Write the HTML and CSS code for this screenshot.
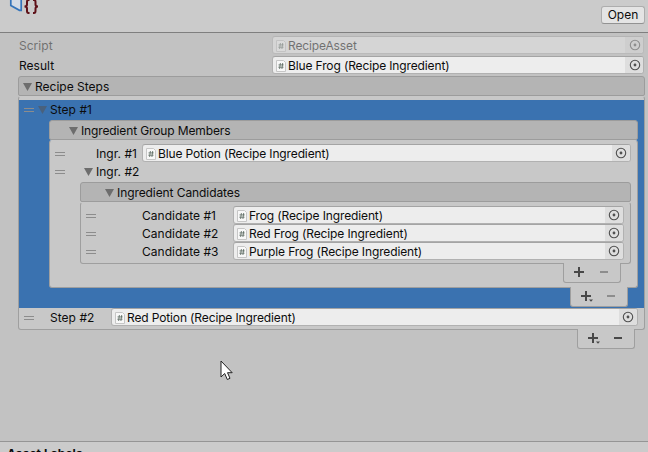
FILE: index.html
```html
<!DOCTYPE html>
<html lang="en">
<head>
<meta charset="utf-8">
<title>Inspector</title>
<link rel="stylesheet" href="styles.css">
</head>
<body>
<svg class="defs" width="0" height="0">
  <symbol id="script" viewBox="0 0 12 14"><path d="M1.500 1.500h7l2 2v9h-9z" fill="#f8f8f8" stroke="#c6c6c6"/><path d="M5.400 4l-.8 6M7.700 4l-.8 6M3.500 5.900h5.200M3.300 8.200h5.200" stroke="#56655c" stroke-width=".8" fill="none"/></symbol>
  <symbol id="pick" viewBox="0 0 12 12"><circle cx="6" cy="6" r="4.700" fill="none" stroke="#505050" stroke-width="1.100"/><circle cx="6" cy="6" r="1.400" fill="#505050"/></symbol>
  <symbol id="plus" viewBox="0 0 14 12"><path d="M0 6h10M5 1v10" stroke="#484848" stroke-width="2"/></symbol>
  <symbol id="plusmenu" viewBox="0 0 14 12"><path d="M0 6h10M5 1v10" stroke="#484848" stroke-width="2"/><path d="M8 9.500h4l-2 2.300z" fill="#484848"/></symbol>
</svg>
<header class="top">
  <svg class="logo" width="32" height="16" viewBox="0 0 32 16"><path d="M2.800 0v5.400l8.700 4.900h1.700V0" fill="#d3dbe5" stroke="#3474ba" stroke-width="1.700"/><path d="M21.500 0h-1q-1.500 0-1.500 2v2.500q0 2-2.500 2q2.500 0 2.500 2v2.500q0 2 1.500 2h1M25 0h1q1.500 0 1.500 2v2.500q0 2 2.500 2q-2.500 0-2.500 2v2.500q0 2-1.500 2h-1" fill="none" stroke="#5e1118" stroke-width="2"/></svg>
  <button class="open">Open</button>
</header>
<main class="props">
  <div class="prop off"><label>Script</label><div class="field"><svg class="doc"><use href="#script"/></svg><span>RecipeAsset</span><i><svg><use href="#pick"/></svg></i></div></div>
  <div class="prop"><label>Result</label><div class="field"><svg class="doc"><use href="#script"/></svg><span>Blue Frog (Recipe Ingredient)</span><i><svg><use href="#pick"/></svg></i></div></div>

  <section class="list steps">
    <h2 class="head"><b class="tri"></b>Recipe Steps</h2>
    <div class="body">
      <div class="selected">
        <div class="title"><b class="grip"></b><b class="tri"></b>Step #1</div>
        <section class="list members">
          <h3 class="head"><b class="tri"></b>Ingredient Group Members</h3>
          <div class="body">
            <div class="row"><b class="grip"></b><label>Ingr. #1</label><div class="field"><svg class="doc"><use href="#script"/></svg><span>Blue Potion (Recipe Ingredient)</span><i><svg><use href="#pick"/></svg></i></div></div>
            <div class="row"><b class="grip"></b><b class="tri"></b><span>Ingr. #2</span></div>
            <section class="list candidates">
              <h4 class="head"><b class="tri"></b>Ingredient Candidates</h4>
              <div class="body">
                <div class="row"><b class="grip"></b><label>Candidate #1</label><div class="field"><svg class="doc"><use href="#script"/></svg><span>Frog (Recipe Ingredient)</span><i><svg><use href="#pick"/></svg></i></div></div>
                <div class="row"><b class="grip"></b><label>Candidate #2</label><div class="field"><svg class="doc"><use href="#script"/></svg><span>Red Frog (Recipe Ingredient)</span><i><svg><use href="#pick"/></svg></i></div></div>
                <div class="row"><b class="grip"></b><label>Candidate #3</label><div class="field"><svg class="doc"><use href="#script"/></svg><span>Purple Frog (Recipe Ingredient)</span><i><svg><use href="#pick"/></svg></i></div></div>
              </div>
              <div class="foot"><svg><use href="#plus"/></svg><b class="minus dim"></b></div>
            </section>
          </div>
          <div class="foot"><svg><use href="#plusmenu"/></svg><b class="minus dim"></b></div>
        </section>
      </div>
      <div class="row last"><b class="grip"></b><label>Step #2</label><div class="field"><svg class="doc"><use href="#script"/></svg><span>Red Potion (Recipe Ingredient)</span><i><svg><use href="#pick"/></svg></i></div></div>
    </div>
    <div class="foot"><svg><use href="#plusmenu"/></svg><b class="minus"></b></div>
  </section>
</main>
<footer class="labels">Asset Labels</footer>
<svg class="cursor" width="14" height="21" viewBox="0 0 14 21"><path d="M1 1v16l3.700-3.500 2.600 6 2.700-1.200-2.500-5.600h4.700z" fill="#fff" stroke="#222" stroke-width="1"/></svg>
</body>
</html>
```
FILE: styles.css
```css
* { box-sizing: border-box; }
body {
  margin: 0;
  width: 648px;
  height: 452px;
  overflow: hidden;
  display: flex;
  flex-direction: column;
  background: #c2c2c2;
  color: #0c0c0c;
  font: 12px/18px Inter, "Liberation Sans", sans-serif;
  letter-spacing: -.13px;
  white-space: nowrap;
}
.defs { position: absolute; }
.top {
  height: 33px;
  flex: none;
  display: flex;
  justify-content: space-between;
  padding: 0 3px 0 8px;
  background: #cbcbcb;
  border-bottom: 1px solid #7f7f7f;
}
.open {
  width: 44px;
  height: 18px;
  margin-top: 6px;
  padding: 0;
  font: inherit;
  line-height: 16px;
  color: inherit;
  background: #e4e4e4;
  border: 1px solid #adadad;
  border-bottom-color: #929292;
  border-radius: 3px;
}
.props {
  flex: 1;
  padding: 3px 3px 0 18px;
}
.prop {
  display: grid;
  grid-template-columns: 254px 1fr;
  height: 18px;
  margin: 0 1px 2px;
}
.prop .field { margin-left: -1px; }
.prop .field i svg { margin-left: 1px; }
.off { opacity: .45; }
label, .field span, .row > span { padding-top: 2px; }
label, .title, .row > span { letter-spacing: .03px; }
.prop label { padding-top: 1px; }
.field {
  height: 18px;
  display: flex;
  align-items: center;
  background: #ededed;
  border: 1px solid #b1b1b1;
  border-top-color: #a4a4a4;
  border-radius: 3px;
  overflow: hidden;
}
.field span { flex: 1; }
.doc {
  width: 12px;
  height: 14px;
  margin: 1px 1px 0 2px;
}
.field i {
  width: 18px;
  height: 16px;
  display: grid;
  place-items: center;
  background: #dedede;
}
.field i svg { width: 12px; height: 12px; }
.list { display: flex; flex-direction: column; }
.head {
  height: 20px;
  margin: 0;
  padding-top: 2px;
  display: flex;
  align-items: center;
  font: inherit;
  background: #b4b4b4;
  border: 1px solid #9c9c9c;
  border-radius: 3px 3px 2px 2px;
}
.body {
  background: #c8c8c8;
  border: 1px solid #9f9f9f;
  border-top-color: #c8c8c8;
  border-radius: 3px;
}
.tri {
  width: 9px;
  height: 8px;
  flex: none;
  background: #6d6d6d;
  clip-path: polygon(0 0, 100% 0, 50% 100%);
}
.grip {
  width: 10px;
  height: 4px;
  flex: none;
  border: solid #8c8c8c;
  border-width: 1px 0;
}
.row, .title { display: flex; align-items: center; height: 18px; }
.row > .grip, .row > .tri { margin-top: 2px; }
.row .field { flex: 1; }

.steps > .head { padding-left: 4px; letter-spacing: 0; }
.steps > .head .tri { margin-right: 3px; }
.steps > .body { height: 234px; padding-top: 3px; }
.selected { height: 208px; background: #3a72b0; }
.title { height: 20px; padding-left: 5px; }
.title .grip { margin-right: 4px; }
.title .tri { margin-right: 3px; background: #49617d; }
.last { padding: 0 6px 0 5px; }
.last .grip { margin-right: 16px; }
.last label { width: 61px; }

.members { margin: 0 6px 0 30px; }
.members > .head { padding-left: 19px; }
.members > .head .tri { margin-right: 3px; }
.members > .body { height: 148px; padding: 3px 6px 0 5px; }
.members > .body > .row > label { width: 46px; margin-left: 31px; }
.members > .body > .row > .tri { margin: 2px 3px 0 19px; }

.candidates { margin: 2px 0 0 25px; }
.candidates > .head { padding-left: 24px; letter-spacing: -.08px; }
.candidates > .head .tri { margin-right: 3px; }
.candidates > .body { height: 62px; padding: 3px 6px 0 5px; }
.candidates label { width: 91px; margin-left: 46px; }

.foot {
  width: 58px;
  height: 20px;
  margin: -1px 10px 0 0;
  padding: 3px 12px 0 10px;
  align-self: flex-end;
  display: flex;
  justify-content: space-between;
  background: #c8c8c8;
  border: 1px solid #9f9f9f;
  border-top: 0;
  border-radius: 0 0 3px 3px;
}
.foot svg { width: 14px; height: 12px; }
.minus { width: 8px; height: 2px; margin-top: 5px; background: #484848; }
.dim { background: #8d8d8d; }
.labels {
  height: 11px;
  flex: none;
  padding: 3px 7px;
  background: #cbcbcb;
  border-top: 1px solid #959595;
  font-weight: 700;
  letter-spacing: .05px;
}
.cursor { position: absolute; left: 220px; top: 360px; }
```
